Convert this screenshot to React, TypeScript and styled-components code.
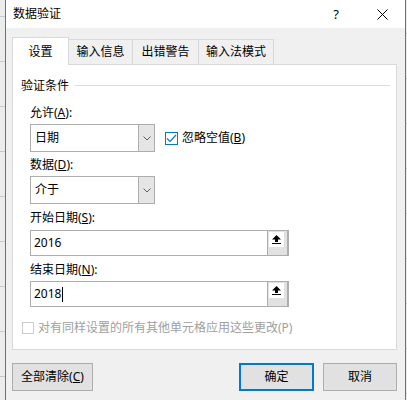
import React from "react";
import styled, { createGlobalStyle } from "styled-components";

const Global = createGlobalStyle`
  html, body { margin: 0; padding: 0; background: #ececec; }
  body {
    font-family: "Noto Sans", "Noto Sans CJK SC", sans-serif;
    font-size: 12px;
    color: #000;
  }
  * { box-sizing: border-box; }
`;

const Screen = styled.div`
  display: flex;
  width: 407px;
  height: 400px;
  overflow: hidden;
`;

const Sheet = styled.div<{ $w: number; $offset: number }>`
  flex: none;
  width: ${(p) => p.$w}px;
  background-color: #ececec;
  background-image: linear-gradient(to bottom, #c9c9c9 0 1px, transparent 1px 45px);
  background-size: 100% 45px;
  background-position: 0 ${(p) => p.$offset}px;
`;

const Dialog = styled.div`
  flex: 1;
  display: flex;
  flex-direction: column;
  background: #f0f0f0;
  border-left: 1px solid #2a80d6;
  border-right: 1px solid #2a80d6;
`;

const TitleBar = styled.div`
  display: flex;
  align-items: center;
  height: 28px;
  background: #fff;
  padding-left: 7px;
`;

const Title = styled.div`
  flex: 1;
  line-height: 28px;
  font-size: 12px;
`;

const TitleButton = styled.div`
  width: 46px;
  height: 28px;
  display: flex;
  align-items: center;
  justify-content: center;
  font-size: 13px;
  line-height: 28px;
`;

const Body = styled.div`
  display: flex;
  flex-direction: column;
  padding: 9px 8px 0 6px;
`;

const TabStrip = styled.div`
  display: flex;
  align-items: flex-end;
  height: 27px;
  position: relative;
  z-index: 1;
`;

const Tab = styled.div<{ $active?: boolean; $w: number }>`
  width: ${(p) => p.$w}px;
  height: ${(p) => (p.$active ? 28 : 25)}px;
  margin-bottom: ${(p) => (p.$active ? -1 : 0)}px;
  border: 1px solid #d9d9d9;
  border-bottom: none;
  background: ${(p) => (p.$active ? "#fff" : "#f0f0f0")};
  display: flex;
  align-items: center;
  justify-content: center;
  padding-top: ${(p) => (p.$active ? 1 : 0)}px;
  line-height: 14px;
  & + & {
    margin-left: -1px;
  }
`;

const Panel = styled.div`
  width: 385px;
  height: 286px;
  border: 1px solid #d9d9d9;
  background: #fff;
  padding: 0 6px 0 8px;
  display: flex;
  flex-direction: column;
`;

const GroupHeader = styled.div`
  display: flex;
  align-items: center;
  height: 14px;
  margin-top: 14px;
  line-height: 14px;
`;

const GroupLine = styled.div`
  flex: 1;
  height: 1px;
  background: #dcdcdc;
  margin-left: 6px;
  margin-top: -1px;
`;

const Fields = styled.div`
  display: flex;
  flex-direction: column;
  padding-left: 9px;
`;

const Label = styled.div<{ $mt: number }>`
  height: 14px;
  line-height: 14px;
  margin-top: ${(p) => p.$mt}px;
`;

const U = styled.span`
  text-decoration: underline;
  text-underline-offset: 1px;
`;

const Row = styled.div<{ $mt: number }>`
  display: flex;
  align-items: center;
  margin-top: ${(p) => p.$mt}px;
`;

const Select = styled.div`
  display: flex;
  width: 125px;
  height: 28px;
  border: 1px solid #adadad;
  background: #fff;
`;

const SelectValue = styled.div`
  flex: 1;
  padding-left: 4px;
  line-height: 26px;
`;

const SelectButton = styled.div`
  width: 16px;
  border-left: 1px solid #adadad;
  background: #e5e5e5;
  display: flex;
  align-items: center;
  justify-content: center;
`;

const CheckBox = styled.div<{ $disabled?: boolean }>`
  width: ${(p) => (p.$disabled ? 12 : 13)}px;
  height: ${(p) => (p.$disabled ? 12 : 13)}px;
  border: 1px solid ${(p) => (p.$disabled ? "#cccccc" : "#0078d7")};
  background: #fff;
  display: flex;
  align-items: center;
  justify-content: center;
  flex: none;
`;

const CheckLabel = styled.div<{ $disabled?: boolean; $ml: number }>`
  margin-left: ${(p) => p.$ml}px;
  line-height: 14px;
  color: ${(p) => (p.$disabled ? "#a0a0a0" : "#000")};
`;

const Input = styled.div<{ $mt: number }>`
  display: flex;
  width: 259px;
  height: 26px;
  margin-top: ${(p) => p.$mt}px;
  border: 1px solid #adadad;
  background: #fff;
`;

const InputText = styled.div`
  flex: 1;
  display: flex;
  align-items: center;
  padding-left: 3px;
  line-height: 24px;
`;

const Caret = styled.span`
  display: inline-block;
  width: 1px;
  height: 15px;
  background: #000;
  margin-left: 1px;
`;

const RefButton = styled.div`
  width: 21px;
  background: #e1e1e1;
  border-left: 1px solid #adadad;
  border-right: 1px solid #adadad;
  padding: 1px 0 0 1px;
`;

const RefIcon = styled.div`
  width: 15px;
  height: 15px;
  background: #fff;
  display: flex;
  align-items: center;
  justify-content: center;
`;

const ButtonRow = styled.div`
  display: flex;
  margin-top: 13px;
  padding-left: 6px;
  padding-right: 8px;
`;

const Button = styled.div<{ $w: number; $primary?: boolean; $ml?: number }>`
  width: ${(p) => p.$w}px;
  height: 28px;
  margin-left: ${(p) => p.$ml ?? 0}px;
  border: ${(p) => (p.$primary ? "2px solid #0078d7" : "1px solid #adadad")};
  background: #e1e1e1;
  display: flex;
  align-items: center;
  justify-content: center;
  line-height: 14px;
`;

const Spacer = styled.div`
  flex: 1;
`;

const Chevron = () => (
  <svg width="8" height="5" viewBox="0 0 8 5">
    <path d="M0.5 0.5 L4 4 L7.5 0.5" fill="none" stroke="#606060" strokeWidth="1" />
  </svg>
);

const UpArrow = () => (
  <svg width="9" height="10" viewBox="0 0 9 10">
    <path d="M4.5 0 L9 4.5 L6 4.5 L6 7 L3 7 L3 4.5 L0 4.5 Z" fill="#000" />
    <rect x="0" y="8" width="9" height="1" fill="#000" />
  </svg>
);

const Check = () => (
  <svg width="11" height="11" viewBox="0 0 11 11">
    <path d="M1 5.5 L4 8.5 L10 2" fill="none" stroke="#0078d7" strokeWidth="1.2" />
  </svg>
);

const CloseIcon = () => (
  <svg width="11" height="11" viewBox="0 0 11 11">
    <path d="M0.5 0.5 L10.5 10.5 M10.5 0.5 L0.5 10.5" stroke="#000" strokeWidth="1" />
  </svg>
);

export default function App() {
  return (
    <>
      <Global />
      <Screen>
        <Sheet $w={5} $offset={16} />
        <Dialog>
          <TitleBar>
            <Title>数据验证</Title>
            <TitleButton>?</TitleButton>
            <TitleButton>
              <CloseIcon />
            </TitleButton>
          </TitleBar>
          <Body>
            <TabStrip>
              <Tab $active $w={57}>设置</Tab>
              <Tab $w={65}>输入信息</Tab>
              <Tab $w={67}>出错警告</Tab>
              <Tab $w={76}>输入法模式</Tab>
            </TabStrip>
            <Panel>
              <GroupHeader>
                验证条件
                <GroupLine />
              </GroupHeader>
              <Fields>
                <Label $mt={13}>
                  允许(<U>A</U>):
                </Label>
                <Row $mt={4}>
                  <Select>
                    <SelectValue>日期</SelectValue>
                    <SelectButton>
                      <Chevron />
                    </SelectButton>
                  </Select>
                  <CheckBox style={{ marginLeft: 10 }}>
                    <Check />
                  </CheckBox>
                  <CheckLabel $ml={4}>
                    忽略空值(<U>B</U>)
                  </CheckLabel>
                </Row>
                <Label $mt={6}>
                  数据(<U>D</U>):
                </Label>
                <Row $mt={4}>
                  <Select>
                    <SelectValue>介于</SelectValue>
                    <SelectButton>
                      <Chevron />
                    </SelectButton>
                  </Select>
                </Row>
                <Label $mt={7}>
                  开始日期(<U>S</U>):
                </Label>
                <Input $mt={5}>
                  <InputText>2016</InputText>
                  <RefButton>
                    <RefIcon>
                      <UpArrow />
                    </RefIcon>
                  </RefButton>
                </Input>
                <Label $mt={7}>
                  结束日期(<U>N</U>):
                </Label>
                <Input $mt={4}>
                  <InputText>
                    2018
                    <Caret />
                  </InputText>
                  <RefButton>
                    <RefIcon>
                      <UpArrow />
                    </RefIcon>
                  </RefButton>
                </Input>
              </Fields>
              <Row $mt={14} style={{ marginLeft: 1 }}>
                <CheckBox $disabled />
                <CheckLabel $disabled $ml={4}>
                  对有同样设置的所有其他单元格应用这些更改(P)
                </CheckLabel>
              </Row>
            </Panel>
          </Body>
          <ButtonRow>
            <Button $w={81}>
              全部清除(<U>C</U>)
            </Button>
            <Spacer />
            <Button $w={75} $primary>
              确定
            </Button>
            <Button $w={74} $ml={9}>
              取消
            </Button>
          </ButtonRow>
        </Dialog>
        <Sheet $w={1} $offset={33} />
      </Screen>
    </>
  );
}
